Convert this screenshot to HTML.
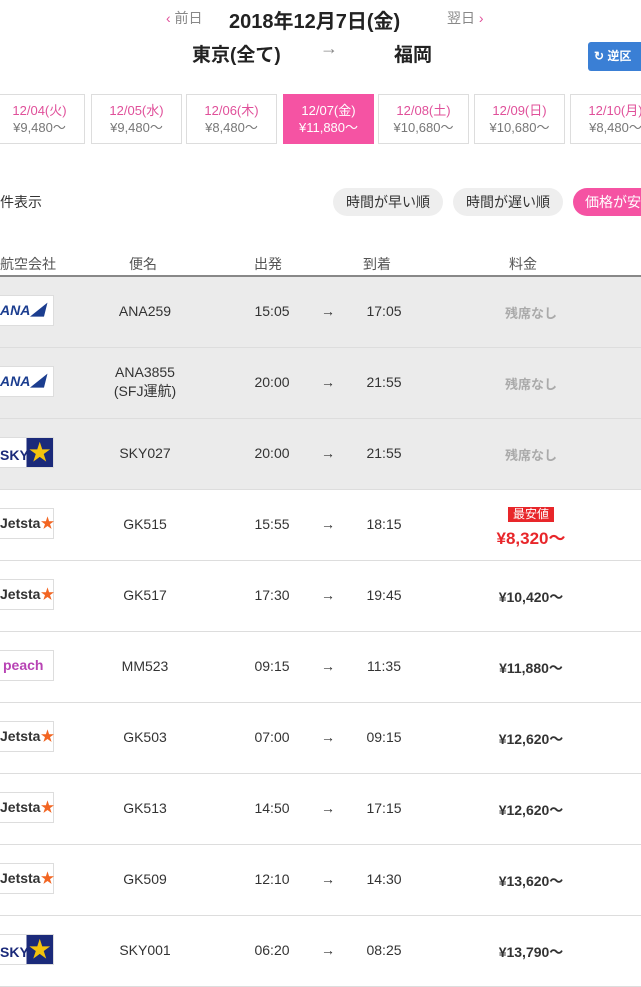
<!DOCTYPE html>
<html><head><meta charset="utf-8"><style>
*{margin:0;padding:0;box-sizing:border-box}
body{width:641px;height:970px;overflow:hidden;background:#fff;font-family:"Liberation Sans","Noto Sans CJK JP",sans-serif;color:#333;position:relative}
.a{position:absolute;white-space:nowrap}
.c{transform:translateX(-50%)}
.day{position:absolute;top:94px;width:91px;height:50px;border:1px solid #ddd;text-align:center;font-size:13px;line-height:17px;padding-top:7px;color:#e0509a}
.day span{color:#777;display:block}
.day.on{background:#f553a3;border-color:#f553a3;color:#fff}
.day.on span{color:#fff}
.btn{position:absolute;top:188px;height:28px;border-radius:14px;background:#eee;font-size:14px;line-height:28px;text-align:center;color:#333}
.row{position:absolute;left:0;width:641px;height:71px;border-bottom:1px solid #ddd;font-size:14px}
.row.g{background:#ebebeb}
.row div{position:absolute;top:26px;white-space:nowrap;transform:translateX(-50%)}
.row .logo{position:absolute;left:0;top:18px;width:54px;height:31px;background:#fff;border:1px solid #ddd;border-left:none;font-weight:bold;font-size:14px;line-height:29px;transform:none}
.nos{color:#aaa;font-weight:bold;font-size:13px}
.p{font-weight:bold;font-size:14px}
</style></head><body>
<div class="a" style="left:166px;top:8px;font-size:14px;color:#888"><span style="color:#e0509a">‹</span> 前日</div>
<div class="a" style="left:229px;top:5px;font-size:20px;font-weight:bold;color:#222">2018年12月7日(金)</div>
<div class="a" style="left:447px;top:8px;font-size:14px;color:#888">翌日 <span style="color:#e0509a">›</span></div>
<div class="a" style="left:192px;top:40px;font-size:19px;font-weight:bold;color:#222">東京(全て)</div>
<div class="a" style="left:320px;top:38px;font-size:18px;color:#888">→</div>
<div class="a" style="left:394px;top:40px;font-size:19px;font-weight:bold;color:#222">福岡</div>
<div class="a" style="left:588px;top:42px;width:60px;height:29px;background:#3a7fd5;border-radius:3px;color:#fff;font-size:12px;font-weight:bold;line-height:29px;padding-left:6px">↻ 逆区</div>
<div class="day" style="left:-6px">12/04(火)<span>¥9,480～</span></div>
<div class="day" style="left:91px">12/05(水)<span>¥9,480～</span></div>
<div class="day" style="left:186px">12/06(木)<span>¥8,480～</span></div>
<div class="day on" style="left:283px">12/07(金)<span>¥11,880～</span></div>
<div class="day" style="left:378px">12/08(土)<span>¥10,680～</span></div>
<div class="day" style="left:474px">12/09(日)<span>¥10,680～</span></div>
<div class="day" style="left:570px">12/10(月)<span>¥8,480～</span></div>
<div class="a" style="left:0;top:192px;font-size:14px">件表示</div>
<div class="btn" style="left:333px;width:110px">時間が早い順</div>
<div class="btn" style="left:453px;width:110px">時間が遅い順</div>
<div class="btn" style="left:573px;width:90px;background:#f553a3;color:#fff;text-align:left;padding-left:12px">価格が安い順</div>
<div class="a" style="left:0;top:254px;font-size:14px;color:#555">航空会社</div>
<div class="a c" style="left:143px;top:254px;font-size:14px;color:#555">便名</div>
<div class="a c" style="left:268px;top:254px;font-size:14px;color:#555">出発</div>
<div class="a c" style="left:377px;top:254px;font-size:14px;color:#555">到着</div>
<div class="a c" style="left:523px;top:254px;font-size:14px;color:#555">料金</div>
<div class="a" style="left:0;top:275px;width:641px;height:2px;background:#888"></div>

<div class="row g" style="top:277px"><div class="logo" style="color:#1b3d8f;font-style:italic">ANA◢</div><div style="left:145px">ANA259</div><div style="left:272px">15:05</div><div style="left:328px">→</div><div style="left:384px">17:05</div><div class="nos" style="left:531px">残席なし</div></div>
<div class="row g" style="top:348px"><div class="logo" style="color:#1b3d8f;font-style:italic">ANA◢</div><div style="left:145px;top:15px;text-align:center;line-height:19px">ANA3855<br>(SFJ運航)</div><div style="left:272px">20:00</div><div style="left:328px">→</div><div style="left:384px">21:55</div><div class="nos" style="left:531px">残席なし</div></div>
<div class="row g" style="top:419px"><div class="logo" style="color:#1b2a7a;background:linear-gradient(90deg,#fff 50%,#1b2a7a 50%)">SKY<span style="color:#f4c20d;font-size:22px">★</span></div><div style="left:145px">SKY027</div><div style="left:272px">20:00</div><div style="left:328px">→</div><div style="left:384px">21:55</div><div class="nos" style="left:531px">残席なし</div></div>
<div class="row" style="top:490px"><div class="logo" style="color:#333">Jetsta<span style="color:#f26522">★</span></div><div style="left:145px">GK515</div><div style="left:272px">15:55</div><div style="left:328px">→</div><div style="left:384px">18:15</div><div style="left:531px;top:17px;background:#e8262a;color:#fff;font-size:12px;padding:0 5px;line-height:15px">最安値</div><div style="left:531px;top:34px;color:#e8262a;font-weight:bold;font-size:17px">¥8,320～</div></div>
<div class="row" style="top:561px"><div class="logo" style="color:#333">Jetsta<span style="color:#f26522">★</span></div><div style="left:145px">GK517</div><div style="left:272px">17:30</div><div style="left:328px">→</div><div style="left:384px">19:45</div><div class="p" style="left:531px">¥10,420～</div></div>
<div class="row" style="top:632px"><div class="logo" style="color:#b843b4;padding-left:3px">peach</div><div style="left:145px">MM523</div><div style="left:272px">09:15</div><div style="left:328px">→</div><div style="left:384px">11:35</div><div class="p" style="left:531px">¥11,880～</div></div>
<div class="row" style="top:703px"><div class="logo" style="color:#333">Jetsta<span style="color:#f26522">★</span></div><div style="left:145px">GK503</div><div style="left:272px">07:00</div><div style="left:328px">→</div><div style="left:384px">09:15</div><div class="p" style="left:531px">¥12,620～</div></div>
<div class="row" style="top:774px"><div class="logo" style="color:#333">Jetsta<span style="color:#f26522">★</span></div><div style="left:145px">GK513</div><div style="left:272px">14:50</div><div style="left:328px">→</div><div style="left:384px">17:15</div><div class="p" style="left:531px">¥12,620～</div></div>
<div class="row" style="top:845px"><div class="logo" style="color:#333">Jetsta<span style="color:#f26522">★</span></div><div style="left:145px">GK509</div><div style="left:272px">12:10</div><div style="left:328px">→</div><div style="left:384px">14:30</div><div class="p" style="left:531px">¥13,620～</div></div>
<div class="row" style="top:916px"><div class="logo" style="color:#1b2a7a;background:linear-gradient(90deg,#fff 50%,#1b2a7a 50%)">SKY<span style="color:#f4c20d;font-size:22px">★</span></div><div style="left:145px">SKY001</div><div style="left:272px">06:20</div><div style="left:328px">→</div><div style="left:384px">08:25</div><div class="p" style="left:531px">¥13,790～</div></div>
</body></html>
